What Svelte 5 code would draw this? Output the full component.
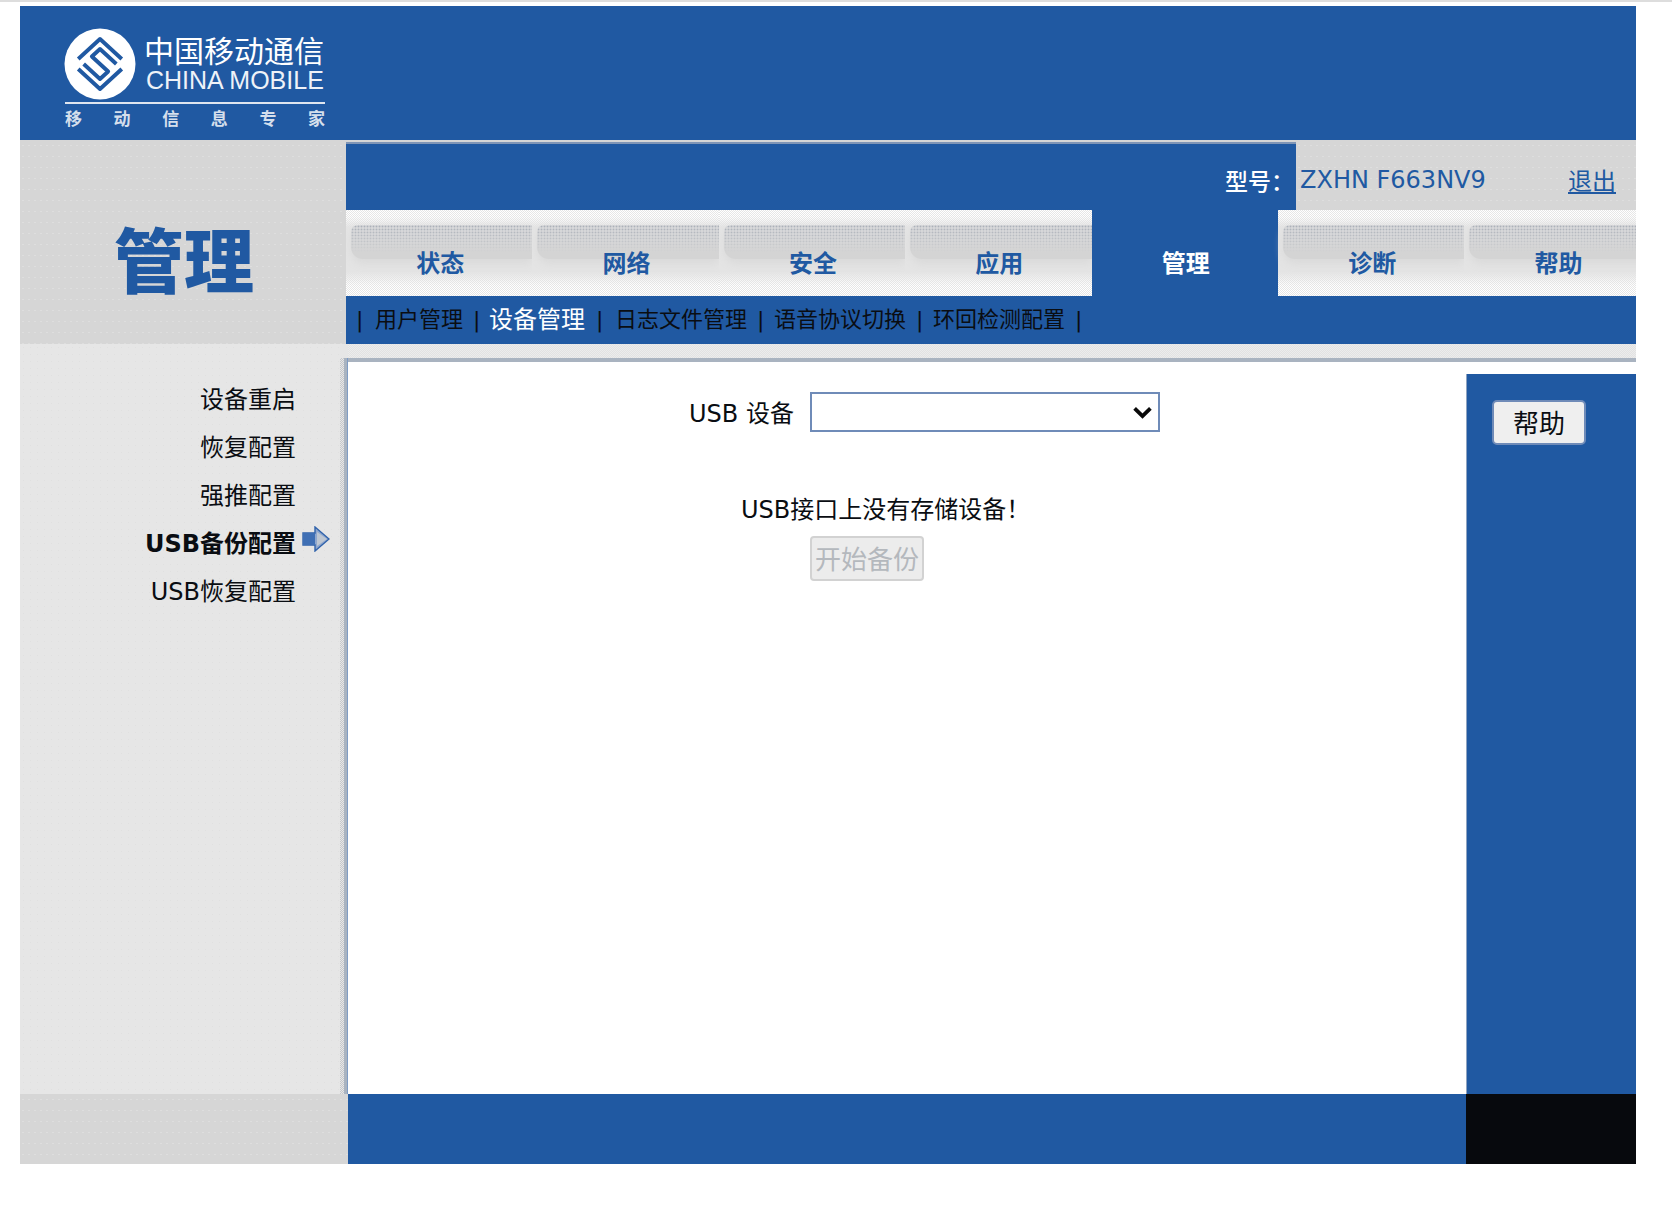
<script>
  const tabs = ['状态', '网络', '安全', '应用', '管理', '诊断', '帮助'];
  const subs = ['用户管理', '设备管理', '日志文件管理', '语音协议切换', '环回检测配置'];
  const nav = ['设备重启', '恢复配置', '强推配置', 'USB备份配置', 'USB恢复配置'];
  const slogan = ['移', '动', '信', '息', '专', '家'];
</script>

<div class="page">
  <header class="top">
    <div class="logo">
      <div class="logo-main">
        <svg class="mark" viewBox="0 0 72 72" width="72" height="72" aria-hidden="true">
          <circle cx="36" cy="36" r="35.5" fill="#fff" />
          <g transform="matrix(.68 .625 -.68 .625 36 11)" fill="none" stroke="#2059a2" stroke-width="3.9" stroke-linejoin="round">
            <path d="M0 32 V0 H32" vector-effect="non-scaling-stroke" />
            <path d="M40 8 V40 H8" vector-effect="non-scaling-stroke" />
            <path d="M32 8 H8 V20 H32 V32 H8" vector-effect="non-scaling-stroke" />
          </g>
        </svg>
        <div class="logo-text">
          <div class="cn">中国移动通信</div>
          <div class="en">CHINA MOBILE</div>
        </div>
      </div>
      <div class="slogan">
        {#each slogan as c}<span>{c}</span>{/each}
      </div>
    </div>
  </header>

  <section class="mast">
    <div class="title dots"><h1>管理</h1></div>
    <div class="mast-right">
      <div class="model">
        <div class="model-label">型号：</div>
        <div class="model-value dots">
          <span class="model-name">ZXHN F663NV9</span>
          <a href="#logout" class="logout">退出</a>
        </div>
      </div>
      <nav class="tabs">
        {#each tabs as t, i}
          <div class="tab" class:active={i === 4}><span>{t}</span></div>
        {/each}
      </nav>
      <nav class="subnav">
        <i class="first">|</i>
        {#each subs as s, i}
          <span class="sub" class:on={i === 1}>{s}</span><i>|</i>
        {/each}
      </nav>
    </div>
  </section>

  <section class="body">
    <aside class="side">
      <ul class="side-nav dots-light">
        {#each nav as n, i}
          <li class:current={i === 3}>
            <span>{n}</span>
            {#if i === 3}
              <svg viewBox="0 0 28 26" width="28" height="26" aria-hidden="true">
                <path d="M1 7 H13 V1 L27 13 L13 25 V19 H1 Z" fill="#8fa7cd" stroke="#2f62ab" stroke-width="1.4" />
                <path d="M1 7 H13 V19 H1 Z" fill="#3f6fb4" />
                <path d="M15 6 L25 13 L15 20 Z" fill="#bdc6d2" />
              </svg>
            {/if}
          </li>
        {/each}
      </ul>
      <div class="side-edge"></div>
    </aside>
    <div class="content">
      <div class="band"></div>
      <div class="work">
        <main class="form">
          <div class="field">
            <label for="usb">USB 设备</label>
            <div class="select-wrap">
              <select id="usb"></select>
              <svg viewBox="0 0 20 14" width="21" height="15" aria-hidden="true">
                <path d="M2.5 3 L10 10.5 L17.5 3" fill="none" stroke="#0a0a0a" stroke-width="3.6" />
              </svg>
            </div>
          </div>
          <p class="msg">USB接口上没有存储设备！</p>
          <button class="start" disabled>开始备份</button>
        </main>
        <aside class="helpcol">
          <button class="help">帮助</button>
        </aside>
      </div>
    </div>
  </section>

  <footer class="foot">
    <div class="foot-l dots"></div>
    <div class="foot-m"></div>
    <div class="foot-r"></div>
  </footer>
</div>

<style>
  :global(body) {
    margin: 0;
    background: #fff;
  }
  .page {
    --blue: #2059a2;
    width: 1616px;
    margin-left: 20px;
    padding-top: 6px;
    font-family: "DejaVu Sans", "Noto Sans CJK SC", sans-serif;
    font-size: 24px;
    color: #0a0d12;
  }
  .page::before {
    content: "";
    position: absolute;
    left: 0;
    top: 0;
    width: 100%;
    height: 2px;
    background: #ddd;
  }
  .dots {
    background-color: #d6d6d6;
    background-image: radial-gradient(circle, #dedede 0.7px, transparent 1px);
    background-size: 6px 11px;
  }
  .dots-light {
    background-color: #e6e6e6;
    background-image: radial-gradient(circle, #e0e0e0 0.7px, transparent 1px);
    background-size: 7px 7px;
  }

  .top {
    height: 134px;
    background: var(--blue);
    box-sizing: border-box;
    padding: 22px 0 0 45px;
  }
  .logo {
    width: 260px;
  }
  .logo-main {
    display: flex;
    align-items: center;
    height: 71px;
    gap: 8px;
    border-bottom: 2px solid #dfe6f0;
    padding-bottom: 3px;
    box-sizing: content-box;
  }
  .mark {
    flex: none;
    margin-left: -1px;
  }
  .logo-text {
    color: #fff;
    line-height: 1;
  }
  .cn {
    font-family: "Noto Sans CJK SC", sans-serif;
    font-size: 30px;
    width: 182px;
    line-height: 34px;
    margin-top: -3px;
  }
  .en {
    font-family: "Liberation Sans", sans-serif;
    font-size: 25px;
    letter-spacing: 0;
    line-height: 24px;
    color: #eef2f8;
    margin: 2px 0 0 2px;
    white-space: nowrap;
  }
  .slogan {
    display: flex;
    justify-content: space-between;
    margin-top: 2px;
    font-family: "Noto Sans CJK SC", sans-serif;
    font-size: 17px;
    font-weight: 700;
    line-height: 24px;
    color: #d5dfec;
  }

  .mast {
    display: grid;
    grid-template-columns: 326px 1fr;
    height: 204px;
  }
  .title {
    display: flex;
    align-items: center;
    justify-content: center;
  }
  .title h1 {
    margin: 0 0 0 2px;
    font-family: "Noto Sans CJK SC", sans-serif;
    font-size: 70px;
    line-height: 1;
    font-weight: 900;
    color: var(--blue);
    transform: translateY(16px);
  }
  .mast-right {
    display: flex;
    flex-direction: column;
    min-width: 0;
  }
  .model {
    display: grid;
    grid-template-columns: 950px 1fr;
    height: 70px;
    background: #d6d6d6;
  }
  .model-label {
    margin-top: 4px;
    background: var(--blue);
    color: #fff;
    text-align: right;
    padding: 22px 2px 0 0;
    font-size: 23px;
    line-height: 32px;
    box-shadow: 0 -2px 0 #7f95b6;
    font-weight: 500;
  }
  .model-value {
    display: flex;
    justify-content: space-between;
    padding: 25px 20px 0 4px;
    line-height: 30px;
  }
  .model-name {
    color: var(--blue);
    font-size: 24px;
  }
  .logout {
    color: var(--blue);
    text-decoration: underline;
    margin-top: 2px;
    height: 30px;
  }

  .tabs {
    display: flex;
    height: 86px;
    overflow: hidden;
  }
  .tab {
    flex: 0 0 186.4px;
    position: relative;
    display: flex;
    align-items: center;
    justify-content: center;
    padding: 21px 0 0 2px;
    box-sizing: border-box;
    color: var(--blue);
    font-weight: 700;
    background:
      linear-gradient(to bottom, transparent 0, transparent 8%, #e4e4e4 20%, #e4e4e4 72%, transparent 88%),
      repeating-conic-gradient(#fff 0 25%, #e6e6e6 0 50%) 0 0 / 2px 2px;
  }
  .tab::before {
    content: "";
    position: absolute;
    left: 5px;
    right: 0;
    top: 15px;
    height: 34px;
    border-radius: 7px 0 0 12px;
    background:
      linear-gradient(to bottom, rgba(214, 214, 214, 0) 0, rgba(214, 214, 214, 0.5) 45%, #d4d4d4 80%),
      radial-gradient(circle, #aab0b8 0.8px, transparent 1.1px) 0 0 / 3px 3px,
      #d6d7d9;
    box-shadow: 0 5px 8px #dadada;
  }
  .tab span {
    position: relative;
    line-height: 32px;
  }
  .tab.active {
    background: var(--blue);
    color: #fff;
  }
  .tab.active::before {
    display: none;
  }

  .subnav {
    display: flex;
    align-items: center;
    height: 48px;
    background: var(--blue);
    padding-left: 10px;
    font-size: 22px;
    white-space: nowrap;
  }
  .subnav i {
    font-style: normal;
    width: 3px;
    text-align: center;
    color: #0a0d12;
    line-height: 1;
  }
  .subnav .first {
    margin-right: 2px;
  }
  .sub {
    margin: 0 10px 0 14px;
    color: #0a0d12;
    line-height: 30px;
  }
  .sub.on {
    margin: 0 11px 0 13px;
    color: #fff;
    font-size: 24px;
  }
  .sub.on + i {
    margin-right: 2px;
  }

  .body {
    display: grid;
    grid-template-columns: 328px 1fr;
    height: 750px;
  }
  .side {
    display: flex;
    background: #e6e6e6;
  }
  .side-nav {
    list-style: none;
    margin: 0;
    padding: 29px 0 0;
    width: 320px;
    box-sizing: border-box;
  }
  .side-nav li {
    display: grid;
    grid-template-columns: 276px 28px;
    column-gap: 6px;
    align-items: center;
    height: 48px;
    text-align: right;
    white-space: nowrap;
  }
  .side-nav li svg {
    margin-top: -4px;
  }
  .current span {
    font-weight: 700;
  }
  .side-edge {
    flex: 1;
    margin-top: 14px;
    background:
      linear-gradient(to right, transparent 0, transparent 4px, #a9b3c0 4px, #a9b3c0 7px, #7f9cc4 7px, #7f9cc4 8px),
      repeating-conic-gradient(#c6c8cc 0 25%, #e6e6e6 0 50%) 0 0 / 2px 2px;
  }

  .content {
    display: flex;
    flex-direction: column;
    min-width: 0;
  }
  .band {
    height: 18px;
    box-sizing: border-box;
    background: repeating-conic-gradient(#e2e2e2 0 25%, #ececec 0 50%) 0 0 / 2px 2px;
    border-bottom: 4px solid #a9b3c0;
  }
  .work {
    flex: 1;
    display: grid;
    grid-template-columns: 1118px 170px;
    min-height: 0;
  }
  .form {
    background: #fff;
    padding-top: 30px;
  }
  .field {
    display: flex;
    align-items: center;
    height: 40px;
    padding-left: 341px;
  }
  .field label {
    width: 121px;
    flex: none;
    margin-top: -1px;
  }
  .select-wrap {
    position: relative;
    display: flex;
    width: 350px;
    height: 40px;
  }
  .select-wrap select {
    appearance: none;
    width: 100%;
    height: 100%;
    border: 2px solid #6f8bb8;
    border-radius: 0;
    background: #fff;
  }
  .select-wrap svg {
    position: absolute;
    right: 7px;
    top: 13px;
    pointer-events: none;
  }
  .msg {
    margin: 60px 0 0 393px;
    line-height: 36px;
  }
  .start {
    display: block;
    margin: 8px 0 0 462px;
    width: 114px;
    height: 45px;
    padding: 0 0 3px;
    font: inherit;
    font-size: 26px;
    color: #b4b8bd;
    background: #ececec;
    border: 2px solid #d2d2d2;
    border-radius: 4px;
  }
  .helpcol {
    margin-top: 12px;
    background: var(--blue);
    border-left: 1px solid #8ea3c0;
    box-sizing: border-box;
    padding: 26px 0 0 25px;
  }
  .help {
    display: block;
    width: 94px;
    height: 45px;
    padding: 0 0 2px;
    font: inherit;
    font-size: 26px;
    color: #0a0d12;
    background: #efefef;
    border: 2px solid #6f8bb8;
    border-radius: 5px;
  }

  .foot {
    display: grid;
    grid-template-columns: 328px 1118px 170px;
    height: 70px;
  }
  .foot-m {
    background: var(--blue);
  }
  .foot-r {
    background: #07090d;
  }
</style>
